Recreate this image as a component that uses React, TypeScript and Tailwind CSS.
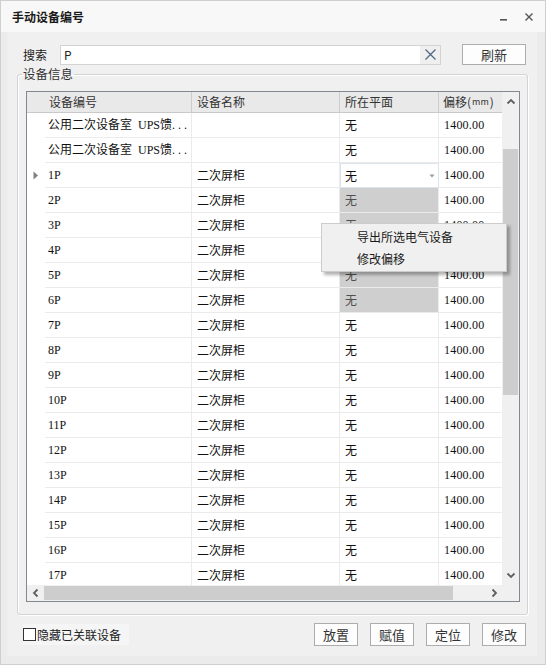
import React from "react";

type Row = { code: string; name: string; plane: string; offset: string };

const rows: Row[] = [
  { code: "公用二次设备室\u2002UPS馈", name: "", plane: "无", offset: "1400.00" },
  { code: "公用二次设备室\u2002UPS馈", name: "", plane: "无", offset: "1400.00" },
  ...Array.from({ length: 17 }, (_, i) => ({
    code: `${i + 1}P`,
    name: "二次屏柜",
    plane: "无",
    offset: "1400.00",
  })),
];

const grayRows = [3, 4, 5, 6, 7];
const currentRow = 2;

function Chevron({ dir }: { dir: "up" | "down" | "left" | "right" }) {
  const d = {
    up: "M1.5 6.5 L5 3 L8.5 6.5",
    down: "M1.5 3.5 L5 7 L8.5 3.5",
    left: "M6.5 1.5 L3 5 L6.5 8.5",
    right: "M3.5 1.5 L7 5 L3.5 8.5",
  }[dir];
  return (
    <svg width="10" height="10" viewBox="0 0 10 10">
      <path d={d} fill="none" stroke="#606060" strokeWidth="1.8" />
    </svg>
  );
}

function Button({ label }: { label: string }) {
  return (
    <div className="w-[44px] h-[23px] shrink-0 border border-[#adadad] bg-[#fdfdfd] flex items-center justify-center text-[13px] text-[#333]">
      {label}
    </div>
  );
}

export default function App() {
  return (
    <div className="relative w-[546px] h-[665px] border border-[#cfcfcf] bg-[#ebebeb] flex flex-col overflow-hidden font-['Noto_Sans_CJK_SC',sans-serif] text-[12px] text-[#1e1e1e]">
      {/* title bar */}
      <div className="h-[31px] shrink-0 bg-[#f8f8f8] flex items-center pl-[11px] pr-[11px]">
        <span className="font-bold text-[12px] text-[#1a1a1a]">手动设备编号</span>
        <div className="ml-auto flex items-center gap-[16px]">
          <svg width="9" height="10" viewBox="0 0 9 10">
            <rect x="1" y="7" width="7" height="1.6" fill="#555" />
          </svg>
          <svg width="10" height="10" viewBox="0 0 10 10">
            <path d="M1.5 1.5 L8.5 8.5 M8.5 1.5 L1.5 8.5" stroke="#555" strokeWidth="1.4" />
          </svg>
        </div>
      </div>

      {/* panel */}
      <div className="ml-[6px] mr-[8px] h-[624px] bg-[#f0f0f0] flex flex-col">
        {/* search */}
        <div className="mt-[12px] h-[21px] flex items-center">
          <span className="w-[53px] pl-[16px] shrink-0 text-[12px] text-[#222]">搜索</span>
          <div className="w-[381px] h-[20px] border border-[#d3d3d3] bg-white flex items-center">
            <span className="pl-[3px] text-[12px] text-[#222]">P</span>
            <div className="ml-auto w-[20px] h-full bg-[#efefef] flex items-center justify-center">
              <svg width="13" height="13" viewBox="0 0 13 13">
                <path d="M1.5 1.5 L11.5 11.5 M11.5 1.5 L1.5 11.5" stroke="#4d6585" strokeWidth="1.2" />
              </svg>
            </div>
          </div>
          <div className="ml-[21px] w-[64px] h-[21px] border border-[#adadad] bg-[#fdfdfd] flex items-center justify-center text-[13px] text-[#333]">
            刷新
          </div>
        </div>

        {/* group box */}
        <fieldset className="ml-[10px] mt-[1px] w-[511px] border border-[#d3d3d3] rounded-[3px] pl-[4px] pb-[12px] shadow-[inset_1px_1px_0_#ffffff,1px_1px_0_#ffffff]">
          <legend className="px-[1px] leading-[16px] text-[12.5px] text-[#333]">设备信息</legend>
          <div className="mt-[9px] ml-[4px] w-[494px] h-[511px] border border-[#828790] bg-white flex flex-col">
            <div className="flex h-[493px]">
              {/* grid */}
              <div className="w-[475px] shrink-0 overflow-hidden">
                <div className="flex h-[21px] bg-[#e9e9e9] border-b border-[#c9c9c9] text-[12px] text-[#333]">
                  <div className="w-[18px] shrink-0" />
                  <div className="w-[147px] shrink-0 pl-[4px] border-r border-[#cdcdcd] flex items-center">设备编号</div>
                  <div className="w-[148px] shrink-0 pl-[5px] border-r border-[#cdcdcd] flex items-center">设备名称</div>
                  <div className="w-[99px] shrink-0 pl-[5px] border-r border-[#cdcdcd] flex items-center">所在平面</div>
                  <div className="w-[80px] shrink-0 pl-[4px] flex items-center whitespace-nowrap">
                    偏移(<span className="text-[9px] px-[1px]">mm</span>)
                  </div>
                </div>
                <div className="font-['Liberation_Serif','Noto_Sans_CJK_SC',serif] text-[12px] text-[#111]">
                  {rows.map((r, i) => {
                    const gray = grayRows.includes(i);
                    const cur = i === currentRow;
                    return (
                      <div key={i} className="flex h-[25px]">
                        <div className="w-[18px] shrink-0 flex items-center pl-[6px]">
                          {cur && (
                            <svg width="6" height="9" viewBox="0 0 6 9">
                              <path d="M0.5 0.5 L5 4.5 L0.5 8.5 Z" fill="#808080" />
                            </svg>
                          )}
                        </div>
                        <div className="w-[147px] shrink-0 pl-[3px] border-r border-b border-[#ebebeb] flex items-center whitespace-nowrap">
                          {r.code}
                          {i < 2 && <span className="tracking-[3px]">...</span>}
                        </div>
                        <div className="w-[148px] shrink-0 pl-[5px] border-r border-b border-[#ebebeb] flex items-center font-['Noto_Sans_CJK_SC',sans-serif]">
                          {r.name}
                        </div>
                        {cur ? (
                          <div className="w-[99px] shrink-0 pl-[4px] border border-[#dde3ea] flex items-center font-['Noto_Sans_CJK_SC',sans-serif]">
                            无
                            <svg className="ml-auto mr-[3px]" width="6" height="4" viewBox="0 0 6 4">
                              <path d="M0.5 0.5 L5.5 0.5 L3 3.5 Z" fill="#9a9a9a" />
                            </svg>
                          </div>
                        ) : (
                          <div
                            className={
                              gray
                                ? "w-[99px] shrink-0 pl-[5px] border-r border-b border-[#ebebeb] bg-[#cfcfcf] text-[#505050] flex items-center font-['Noto_Sans_CJK_SC',sans-serif]"
                                : "w-[99px] shrink-0 pl-[5px] border-r border-b border-[#ebebeb] flex items-center font-['Noto_Sans_CJK_SC',sans-serif]"
                            }
                          >
                            {r.plane}
                          </div>
                        )}
                        <div className="w-[80px] shrink-0 pl-[5px] border-b border-[#ebebeb] flex items-center tracking-[0.2px]">
                          {r.offset}
                        </div>
                      </div>
                    );
                  })}
                </div>
              </div>
              {/* vertical scrollbar */}
              <div className="w-[17px] shrink-0 bg-[#f0f0f0] flex flex-col">
                <div className="h-[20px] flex items-center justify-center">
                  <Chevron dir="up" />
                </div>
                <div className="mt-[37px] h-[246px] bg-[#cdcdcd] mx-[1px]" />
                <div className="mt-auto h-[20px] flex items-center justify-center">
                  <Chevron dir="down" />
                </div>
              </div>
            </div>
            {/* horizontal scrollbar */}
            <div className="flex h-[16px]">
              <div className="w-[475px] shrink-0 bg-[#f0f0f0] flex items-center">
                <div className="w-[17px] flex justify-center">
                  <Chevron dir="left" />
                </div>
                <div className="h-[14px] w-[409px] bg-[#cdcdcd]" />
                <div className="ml-auto w-[17px] flex justify-center">
                  <Chevron dir="right" />
                </div>
              </div>
              <div className="w-[17px] shrink-0 bg-[#f0f0f0]" />
            </div>
          </div>
        </fieldset>

        {/* bottom row */}
        <div className="mt-[8px] h-[23px] flex items-center pr-[11px]">
          <div className="ml-[16px] h-[21px] pr-[8px] flex items-center bg-[#f5f5f5]">
            <div className="w-[13px] h-[13px] border border-[#333] bg-white" />
            <span className="ml-[1px] text-[12px] text-[#222]">隐藏已关联设备</span>
          </div>
          <div className="ml-auto flex gap-[12px]">
            <Button label="放置" />
            <Button label="赋值" />
            <Button label="定位" />
            <Button label="修改" />
          </div>
        </div>
      </div>

      {/* context menu */}
      <div className="absolute left-[320px] top-[222px] w-[186px] pt-[2px] pb-[1px] border border-[#cccccc] bg-[#f0f0f0] shadow-[3px_3px_3px_rgba(0,0,0,0.3)] text-[12px] text-[#1a1a1a]">
        <div className="h-[22px] pl-[35px] flex items-center">导出所选电气设备</div>
        <div className="h-[22px] pl-[35px] flex items-center">修改偏移</div>
      </div>
    </div>
  );
}
